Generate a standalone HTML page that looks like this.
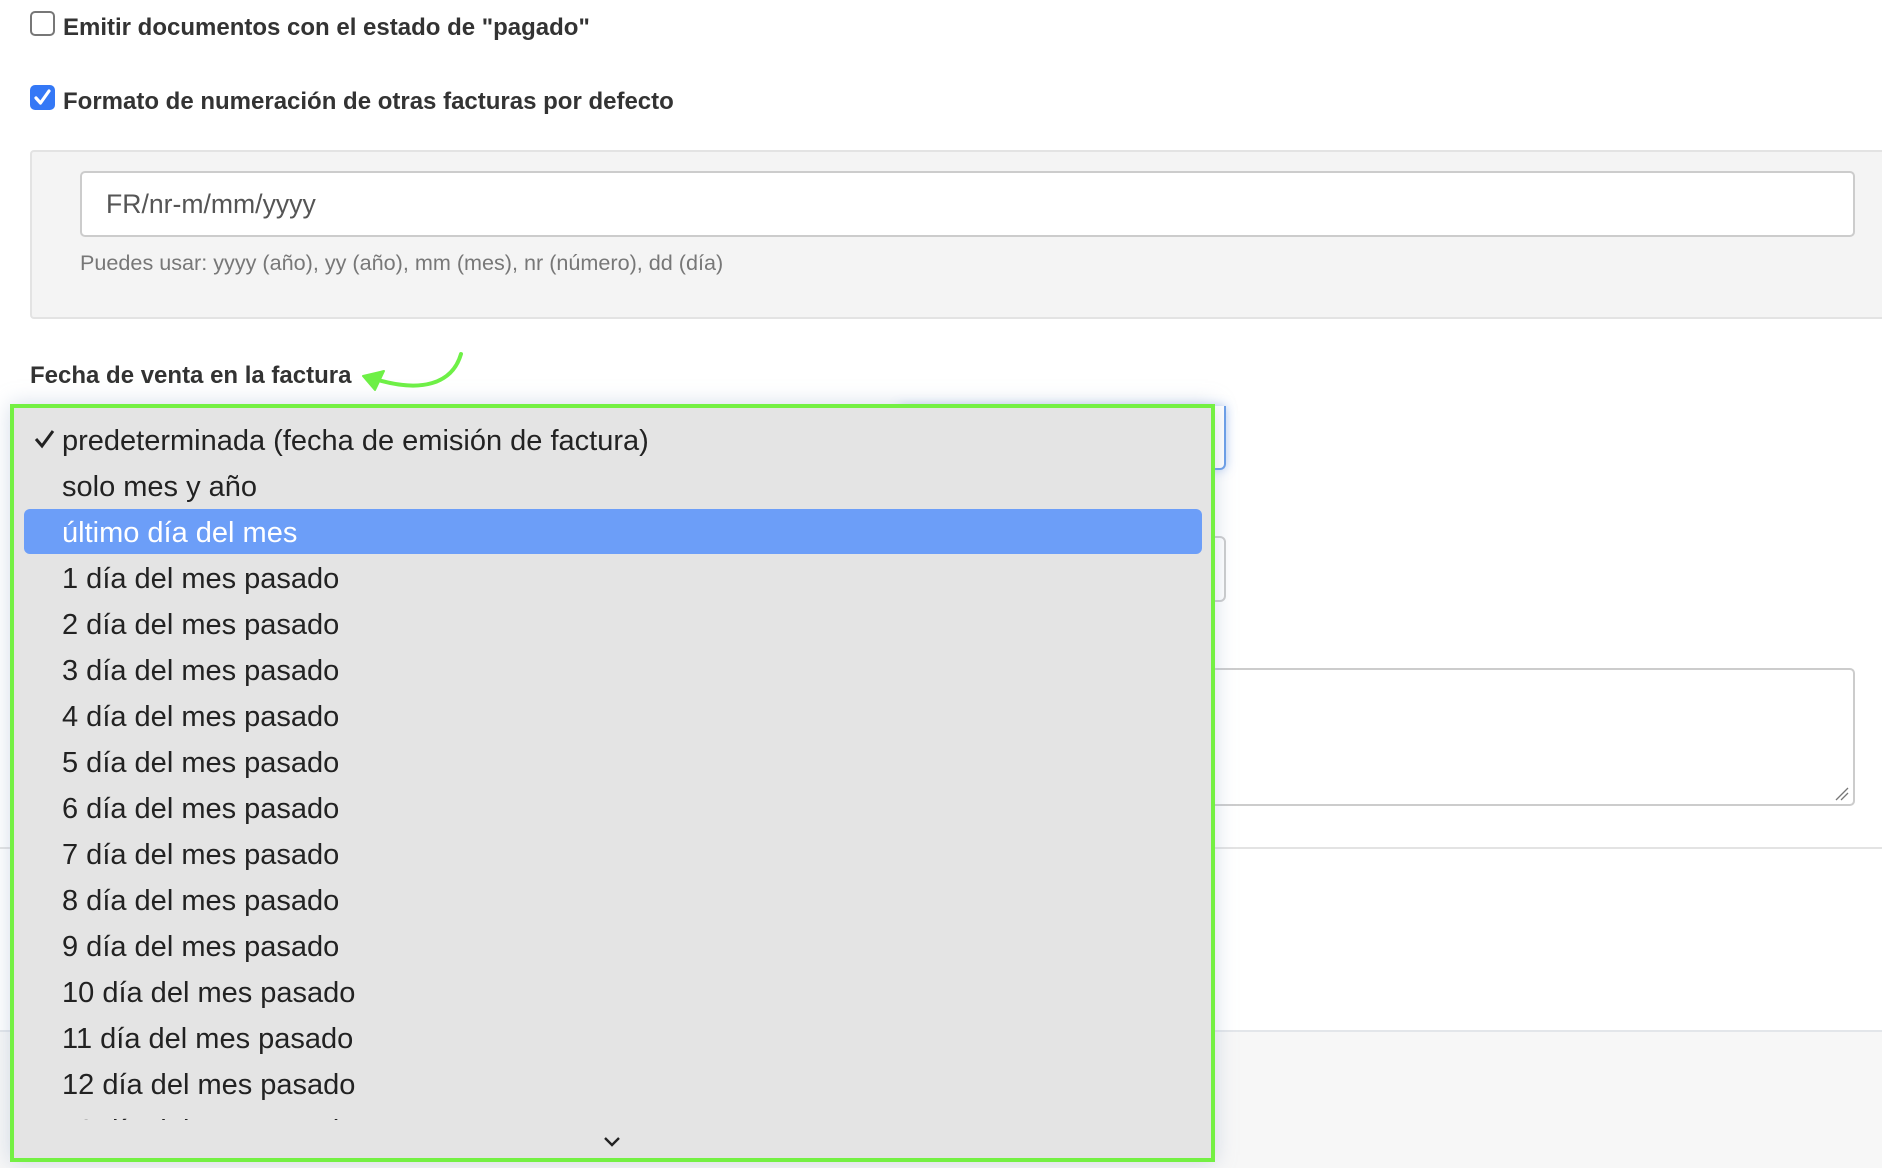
<!DOCTYPE html>
<html><head><meta charset="utf-8">
<style>
*{box-sizing:border-box;margin:0;padding:0}
html,body{width:1882px;height:1168px;overflow:hidden;background:#fff;font-family:"Liberation Sans",Arial,sans-serif;position:relative}
.abs{position:absolute}
.cb{position:absolute;left:30px;width:25px;height:25px;border-radius:5px}
.lbl{position:absolute;left:63px;font-weight:bold;font-size:24px;color:#333;line-height:28px}
.opt{position:absolute;left:62px;font-size:29px;color:#222;line-height:46px;height:46px;white-space:nowrap}
</style></head><body>

<div class="cb" style="top:11px;border:2px solid #777;background:#fff"></div>
<div class="lbl" style="top:14px">Emitir documentos con el estado de "pagado"</div>

<div class="cb" style="top:85px;background:#3478f6">
<svg width="25" height="25" viewBox="0 0 25 25" style="position:absolute;left:0;top:0"><path d="M6 13 L10.5 18 L19 6" stroke="#fff" stroke-width="3.2" fill="none" stroke-linecap="round" stroke-linejoin="round"/></svg>
</div>
<div class="lbl" style="top:88px">Formato de numeración de otras facturas por defecto</div>

<div class="abs" style="left:30px;top:150px;width:1900px;height:169px;background:#f4f4f4;border:2px solid #e3e3e3;border-radius:4px"></div>
<div class="abs" style="left:80px;top:171px;width:1775px;height:66px;background:#fff;border:2px solid #ccc;border-radius:5px"></div>
<div class="abs" style="left:106px;top:189px;font-size:26.6px;color:#555;line-height:30px">FR/nr-m/mm/yyyy</div>
<div class="abs" style="left:80px;top:250px;font-size:21.6px;color:#777;line-height:25px">Puedes usar: yyyy (año), yy (año), mm (mes), nr (número), dd (día)</div>

<div class="abs" style="left:30px;top:362px;font-weight:bold;font-size:24px;color:#333;line-height:28px">Fecha de venta en la factura</div>
<svg class="abs" style="left:0;top:0" width="600" height="420">
<path d="M461 354 C452 385 420 392 378 380" stroke="#6ef046" stroke-width="4" fill="none" stroke-linecap="round"/>
<path d="M363 376 L384 371 L375 390 Z" fill="#6ef046" stroke="#6ef046" stroke-width="2" stroke-linejoin="round"/>
</svg>

<div class="abs" style="left:900px;top:406px;width:326px;height:64px;border:2px solid #6a9ee8;border-top:none;border-radius:0 0 6px 6px;box-shadow:0 0 10px rgba(100,150,230,.5)"></div>
<div class="abs" style="left:900px;top:536px;width:326px;height:66px;border:2px solid #ccc;border-radius:6px"></div>
<div class="abs" style="left:900px;top:668px;width:955px;height:138px;border:2px solid #ccc;border-radius:5px"></div>
<svg class="abs" style="left:1834px;top:786px" width="16" height="16"><path d="M2 14 L14 2 M7 14 L14 7" stroke="#777" stroke-width="1.3"/></svg>
<div class="abs" style="left:0;top:847px;width:1882px;height:2px;background:#e3e3e3"></div>
<div class="abs" style="left:0;top:1030px;width:1882px;height:2px;background:#e3e6ea"></div>
<div class="abs" style="left:0;top:1032px;width:1882px;height:136px;background:#f7f7f7"></div>

<div class="abs" style="left:10px;top:404px;width:1205px;height:758px;border:4px solid #74f043;background:#e4e4e4;box-shadow:0 0 20px rgba(150,170,200,.4)"></div>
<div class="abs" style="left:24px;top:509px;width:1178px;height:45px;background:#6c9ef8;border-radius:6px"></div>
<svg class="abs" style="left:33px;top:429px" width="24" height="20"><path d="M3 10 L9 17 L20 2" stroke="#222" stroke-width="3" fill="none" stroke-linejoin="miter"/></svg>
<div class="abs" style="left:14px;top:418px;width:1190px;height:702px;overflow:hidden">
<div class="opt" style="left:48px;top:0">predeterminada (fecha de emisión de factura)</div>
<div class="opt" style="left:48px;top:46px">solo mes y año</div>
<div class="opt" style="left:48px;top:92px;color:#fff">último día del mes</div>
<div class="opt" style="left:48px;top:138px">1 día del mes pasado</div>
<div class="opt" style="left:48px;top:184px">2 día del mes pasado</div>
<div class="opt" style="left:48px;top:230px">3 día del mes pasado</div>
<div class="opt" style="left:48px;top:276px">4 día del mes pasado</div>
<div class="opt" style="left:48px;top:322px">5 día del mes pasado</div>
<div class="opt" style="left:48px;top:368px">6 día del mes pasado</div>
<div class="opt" style="left:48px;top:414px">7 día del mes pasado</div>
<div class="opt" style="left:48px;top:460px">8 día del mes pasado</div>
<div class="opt" style="left:48px;top:506px">9 día del mes pasado</div>
<div class="opt" style="left:48px;top:552px">10 día del mes pasado</div>
<div class="opt" style="left:48px;top:598px">11 día del mes pasado</div>
<div class="opt" style="left:48px;top:644px">12 día del mes pasado</div>
<div class="opt" style="left:48px;top:690px">13 día del mes pasado</div>
</div>
<svg class="abs" style="left:602px;top:1135px" width="20" height="14"><path d="M3 3 L10 10 L17 3" stroke="#222" stroke-width="2.4" fill="none"/></svg>

</body></html>
